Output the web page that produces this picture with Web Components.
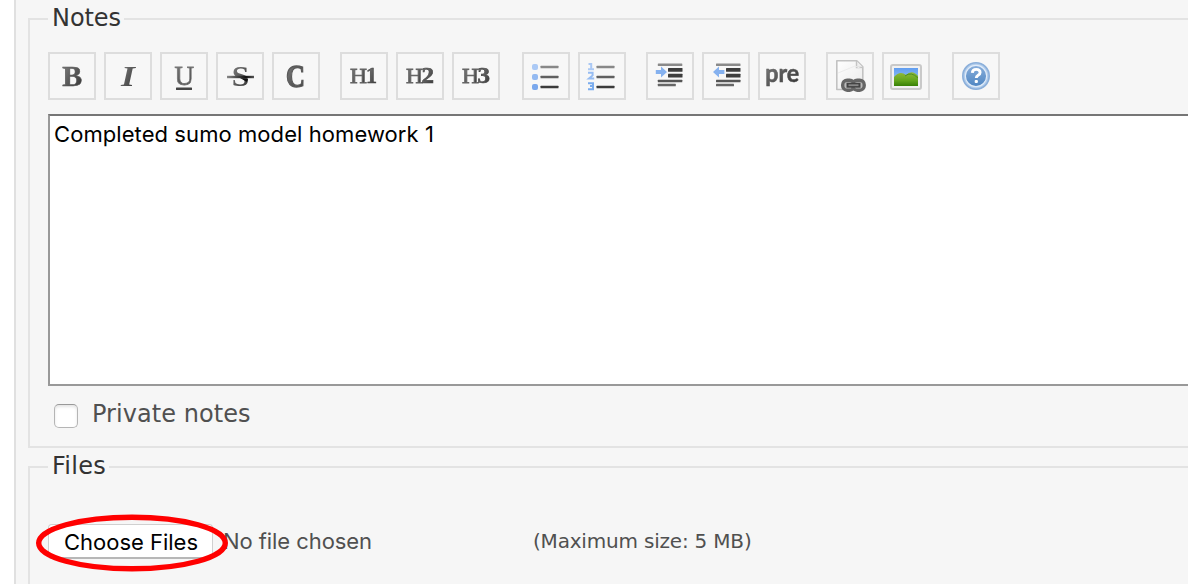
<!DOCTYPE html>
<html lang="en"><head><meta charset="utf-8"><title>Notes</title>
<style>html,body{margin:0;height:584px;overflow:hidden;background:#fff}</style></head>
<body>
<issue-form></issue-form>
<script>
// Text run whose letter spacing is set so that it spans the given advance width.
customElements.define('fit-text', class extends HTMLElement{
  connectedCallback(){
    if(this.shadowRoot) return;
    const r=this.attachShadow({mode:'open'});
    r.innerHTML='<style>:host{display:inline-block;white-space:pre}span{display:inline-block}</style><span><slot></slot></span>';
    const s=r.querySelector('span'), w=+this.getAttribute('width'), n=this.textContent.length;
    s.style.letterSpacing=((w-s.getBoundingClientRect().width)/n)+'px';
  }
});
const T=(t,x,y,w,size,extra='')=>`<text x="${x}" y="${y}" textLength="${w}" lengthAdjust="spacingAndGlyphs" font-family="Liberation Serif, serif" font-weight="700" font-size="${size}" fill="url(#g)" ${extra}>${t}</text>`;
const bars=a=>a.map(([x,y,w,h=2.4,c='#555'])=>`<rect x="${x}" y="${y}" width="${w}" height="${h}" rx=".5" fill="${c}"/>`).join('');
const H=T('H',10,31.3,17,22,'style="font-weight:400" stroke="#666" stroke-width=".8"');
const ICONS={
 bold:T('B',14.3,33.5,20,29.5,'stroke="#555" stroke-width=".5"'),
 italic:T('I',17,33.5,14,29.5,'font-style="italic"'),
 underline:T('U',14.5,32.5,19.5,28,'style="font-weight:400" stroke="#777" stroke-width=".8"')+bars([[16,35.5,16,2.6,'#444']]),
 strike:T('S',15.7,33.5,17.5,29)+'<path d="M11 25H38" stroke="url(#h)" stroke-width="2.4"/><path d="M24 26l8 1-1 3z" fill="#111"/>',
 code:T('C',14,34.5,19,31,'stroke="#5a5a5a" stroke-width="1.3"'),
 h1:H+T('1',26,31.3,11,23,'stroke="#444" stroke-width=".6"'),
 h2:H+T('2',25.5,31.3,12.5,23,'stroke="#444" stroke-width=".6"'),
 h3:H+T('3',25.5,31.3,12.5,23,'stroke="#444" stroke-width=".6"'),
 ul:'<rect x="10" y="12" width="6" height="6" rx="2" fill="#abc9f5"/><rect x="10" y="22" width="6" height="6" rx="2" fill="#94baf1"/><rect x="10" y="32" width="6" height="6" rx="2" fill="#7aa8ed"/>'+bars([[18.5,13.8,18,2.4,'#888'],[18.5,23.8,18,2.4,'#606060'],[18.5,33.8,18,2.4,'#3b3b3b']]),
 ol:'<g fill="none" stroke-width="2"><path stroke="#abc9f5" d="M10.5 12h2.7v5M10 17.2h6"/><path stroke="#96bcf2" d="M10 20.8h4.6v2.6l-3.6 3h5.2"/><path stroke="#7aacee" d="M10 31.2h5v2.8h-3h3v3.2H10"/></g>'+bars([[18.5,13.8,18,2.4,'#888'],[18.5,23.8,18,2.4,'#606060'],[18.5,33.8,18,2.4,'#3b3b3b']]),
 indent:bars([[11.8,11.4,24.5,2.5,'#8a8a8a'],[22,16,14.5,3.7,'#3d3d3d'],[22,21.8,14.5,3.7,'#3d3d3d'],[11.8,27.8,24.5,2.5,'#555'],[11.8,31.8,18,2.5,'#666']])+'<path d="M9.8 18h5.2v-3.4L21 20l-6 5.4V22H9.8z" fill="#85b1ef"/>',
 outdent:bars([[14,11.4,24.5,2.5,'#8a8a8a'],[24,16,14.5,3.7,'#3d3d3d'],[24,21.8,14.5,3.7,'#3d3d3d'],[14,27.8,24.5,2.5,'#555'],[14,31.8,18,2.5,'#666']])+'<path d="M22.4 18H17v-3.4L11 20l6 5.4V22h5.4z" fill="#85b1ef"/>',
 pre:'<text x="7.2" y="29.8" textLength="34" lengthAdjust="spacingAndGlyphs" font-family="Lato, sans-serif" font-weight="700" font-size="24" fill="url(#g)" stroke="#555" stroke-width=".5">pre</text>',
 link:'<path d="M10.8 8.8h20l6 6v22.7h-26z" fill="url(#p)" stroke="#c2c2c2" stroke-width="1.6" stroke-linejoin="round"/><path d="M30.5 9v6.5H37" fill="#eee" stroke="#c4c4c4" stroke-width="1.4"/><path d="M12 21l17-7 7 3" stroke="#ececec" fill="none"/><g fill="#bbb" stroke="#666" stroke-width="3.4"><rect x="16.7" y="28.2" width="11.5" height="10" rx="4.5"/><rect x="26.7" y="28.2" width="11.5" height="10" rx="4.5"/></g><path d="M20.5 33.2h14" stroke="#444" stroke-width="5"/><path d="M22.5 33.2h10" stroke="#888" stroke-width="1.8"/>',
 image:'<rect x="9" y="13" width="30" height="24" rx="2" fill="#f1f1f1" stroke="#c9c9c9" stroke-width="2"/><rect x="12" y="16" width="24" height="18" fill="url(#s)"/><path d="M12 25q6-7 12-2q6-6 12 1v10H12z" fill="url(#v)"/><path d="M23 24q6-5 13 2" stroke="#4c8f24" fill="none"/>',
 help:'<circle cx="24" cy="24" r="13.2" fill="#b1cceb" stroke="#8bafda" stroke-width="1.6"/><circle cx="24" cy="24" r="10.6" fill="url(#b)" stroke="#e0ebf8" stroke-width="1.1"/><path d="M20.3 20.8q.2-3.4 3.9-3.4 3.9 0 3.9 3.1 0 1.7-2 2.8-1.8 1-1.8 2.7" fill="none" stroke="#fff" stroke-width="2.9"/><rect x="22.7" y="28" width="3.2" height="3" rx="1" fill="#fff"/>'
};
const DEFS='<defs><linearGradient id="g" x2="1" y2="1"><stop stop-color="#858585"/><stop offset="1" stop-color="#303030"/></linearGradient><linearGradient id="h" gradientUnits="userSpaceOnUse" x1="11" x2="38" y1="0" y2="0"><stop stop-color="#888"/><stop offset=".7" stop-color="#111"/><stop offset="1" stop-color="#555"/></linearGradient><linearGradient id="p" x2="1" y2="1"><stop stop-color="#fff"/><stop offset="1" stop-color="#eaeaea"/></linearGradient><linearGradient id="s" x2="0" y2="1"><stop stop-color="#609df0"/><stop offset="1" stop-color="#aed1fa"/></linearGradient><linearGradient id="v" x2="0" y2="1"><stop stop-color="#94ba3c"/><stop offset=".6" stop-color="#62a51c"/><stop offset="1" stop-color="#378006"/></linearGradient><linearGradient id="b" x2="0" y2="1"><stop stop-color="#88aedb"/><stop offset="1" stop-color="#4f86c2"/></linearGradient></defs>';
customElements.define('tool-button', class extends HTMLElement{
  connectedCallback(){
    if(this.shadowRoot) return;
    this.attachShadow({mode:'open'}).innerHTML=`<style>:host{display:block;box-sizing:border-box;width:48px;height:48px;border:2px solid #ddd;background:#f7f7f7}svg{display:block;margin:-2px;filter:blur(.6px)}</style><svg width="48" height="48" viewBox="0 0 48 48">${DEFS}${ICONS[this.getAttribute('icon')]}</svg>`;
  }
});
customElements.define('tool-bar', class extends HTMLElement{
  connectedCallback(){
    const groups=[['bold','italic','underline','strike','code'],['h1','h2','h3'],['ul','ol'],['indent','outdent','pre'],['link','image'],['help']];
    this.attachShadow({mode:'open'}).innerHTML=`<style>:host,div{display:flex}div{gap:8px;margin-right:20px}div:nth-of-type(2),div:nth-of-type(5){margin-right:22px}</style>`+groups.map(g=>`<div>${g.map(i=>`<tool-button icon="${i}"></tool-button>`).join('')}</div>`).join('');
  }
});
customElements.define('field-group', class extends HTMLElement{
  connectedCallback(){
    this.attachShadow({mode:'open'}).innerHTML=`<style>:host{display:block;box-sizing:border-box;border:2px solid #e3e3e3;border-right:0;padding-left:18px}header{display:block;width:max-content;height:30px;line-height:30px;margin-top:-17px;padding:0 3px 0 4px;background:#f6f6f6;color:#333;font-size:24px}</style><header><slot name="legend"></slot></header><slot></slot>`;
  }
});
customElements.define('note-area', class extends HTMLElement{
  connectedCallback(){
    this.attachShadow({mode:'open'}).innerHTML=`<style>:host{display:block;box-sizing:border-box;height:272px;border:2px solid #999;border-top-color:#767676;border-right:0;background:#fff;padding:4px 4px;color:#000;font:22px/28px Inter,sans-serif}</style><slot></slot>`;
  }
});
customElements.define('check-row', class extends HTMLElement{
  connectedCallback(){
    this.attachShadow({mode:'open'}).innerHTML=`<style>:host{display:flex;align-items:center;color:#505050;font-size:24px;line-height:28px}i{box-sizing:border-box;width:24px;height:24px;margin:4px 14px 0 6px;border:1.5px solid #b5b5b5;border-top-color:#999;border-radius:5px;background:#fff;box-shadow:inset 0 2px 3px #e5e5e5}</style><i></i><slot></slot>`;
  }
});
customElements.define('file-picker', class extends HTMLElement{
  connectedCallback(){
    this.attachShadow({mode:'open'}).innerHTML=`<style>:host{display:flex;align-items:center;height:36px;color:#505050;font:22px/34px Inter,sans-serif}.b{position:relative;box-sizing:border-box;width:165px;height:35px;padding-left:15px;border:1px solid #d0d0d0;border-bottom:2px solid #b7b7b7;border-radius:4px;background:#fff;color:#000}.n{width:310px;margin-left:10px}.m{font:20px/34px "DejaVu Sans",sans-serif}svg{position:absolute;left:-14px;top:-13px;z-index:1}</style><div class="b"><fit-text width="134">Choose Files</fit-text><svg width="196" height="62"><ellipse cx="97" cy="31" rx="93.3" ry="25.8" fill="none" stroke="#f00" stroke-width="5.4"/></svg></div><div class="n"><fit-text width="149">No file chosen</fit-text></div><div class="m"><fit-text width="218.5">(Maximum size: 5 MB)</fit-text></div>`;
  }
});
customElements.define('issue-form', class extends HTMLElement{
  connectedCallback(){
    this.attachShadow({mode:'open'}).innerHTML=`<style>:host{display:block;box-sizing:border-box;height:584px;margin-left:14px;border-left:2px solid #e0e0e0;background:#f6f6f6;padding:18px 0 0 12px;font-family:"DejaVu Sans",sans-serif;overflow:hidden}.a{height:430px}.f{height:200px;margin-top:18px}tool-bar{margin-top:19px}note-area{margin-top:14px}check-row{margin-top:14px}file-picker{margin-top:42px}</style>
    <field-group class="a"><fit-text slot="legend" width="69">Notes</fit-text><tool-bar></tool-bar><note-area><fit-text width="380">Completed sumo model homework 1</fit-text></note-area><check-row><fit-text width="158.5">Private notes</fit-text></check-row></field-group>
    <field-group class="f"><fit-text slot="legend" width="54">Files</fit-text><file-picker></file-picker></field-group>`;
  }
});
</script>
</body></html>
